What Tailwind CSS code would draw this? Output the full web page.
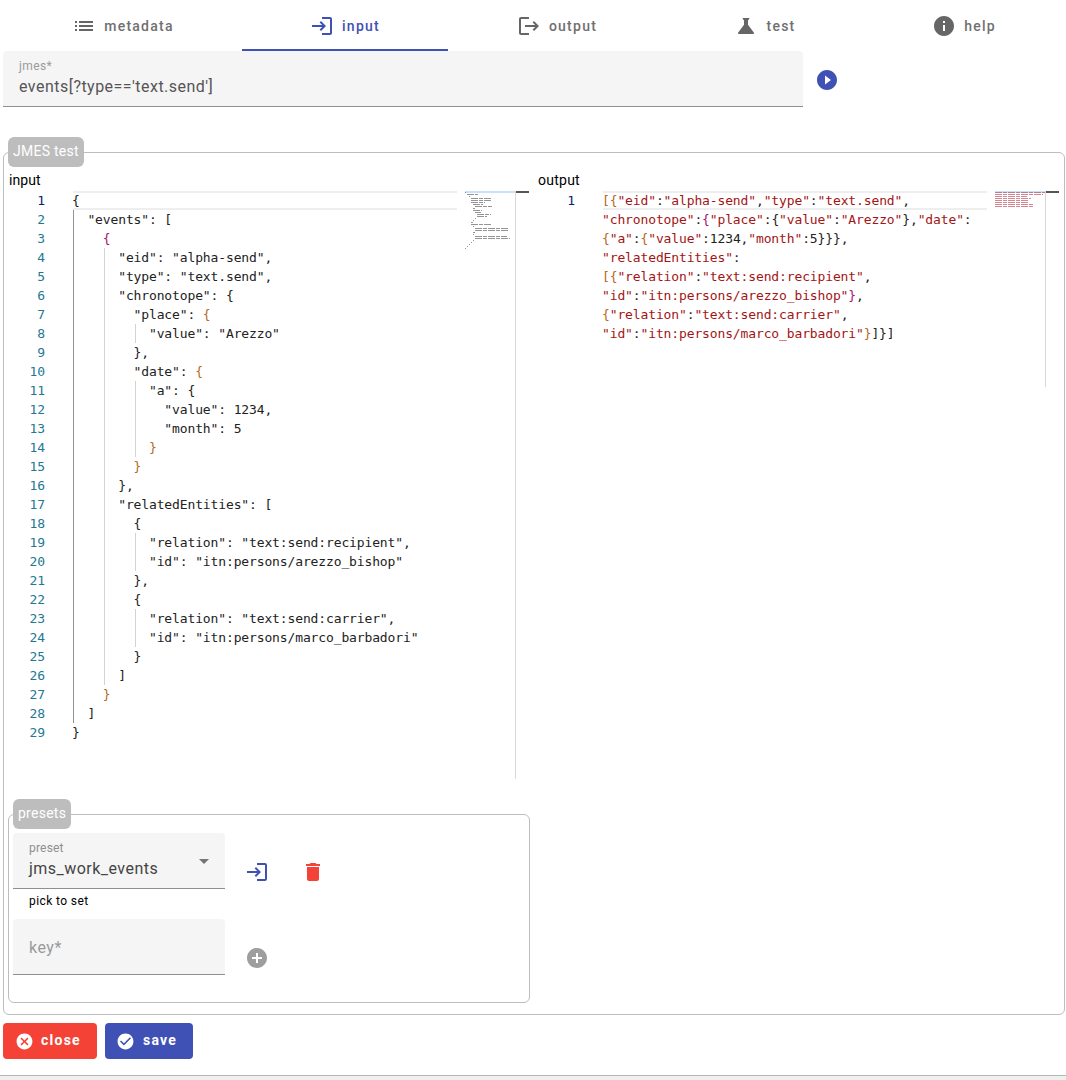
<!DOCTYPE html>
<html>
<head>
<meta charset="utf-8">
<script src="https://cdn.jsdelivr.net/npm/@tailwindcss/browser@4"></script>
</head>
<body class="bg-white">
<div class="w-[1066px] h-[1080px] overflow-hidden flex flex-col font-[Roboto] text-black">
  <nav class="flex h-[51px] shrink-0 text-sm font-medium tracking-[1.25px] text-[#707070]">
    <div class="w-[242px] pl-[4px] pt-[3px] border-b-2 border-transparent flex items-center justify-center gap-2">
      <svg class="w-6 h-6 fill-[#666]" viewBox="0 0 24 24"><path d="M3 13h2v-2H3v2zm0 4h2v-2H3v2zm0-8h2V7H3v2zm4 4h14v-2H7v2zm0 4h14v-2H7v2zM7 7v2h14V7H7z"/></svg>
      <span>metadata</span>
    </div>
    <div class="w-[206px] pt-[3px] border-b-2 border-[#3f51b5] text-[#3f51b5] flex items-center justify-center gap-2">
      <svg class="w-6 h-6 fill-[#3f51b5]" viewBox="0 0 24 24"><path d="M11 7L9.6 8.4l2.6 2.6H2v2h10.2l-2.6 2.6L11 17l5-5-5-5zm9 12h-8v2h8c1.1 0 2-.9 2-2V5c0-1.1-.9-2-2-2h-8v2h8v14z"/></svg>
      <span>input</span>
    </div>
    <div class="w-[217px] pt-[3px] pl-px border-b-2 border-transparent flex items-center justify-center gap-2">
      <svg class="w-6 h-6 fill-[#666]" viewBox="0 0 24 24"><path d="M17 7l-1.41 1.41L18.17 11H8v2h10.17l-2.58 2.58L17 17l5-5zM4 5h8V3H4c-1.1 0-2 .9-2 2v14c0 1.1.9 2 2 2h8v-2H4V5z"/></svg>
      <span>output</span>
    </div>
    <div class="w-[200px] pt-[3px] border-b-2 border-transparent flex items-center justify-center gap-2">
      <svg class="w-6 h-6 fill-[#666]" viewBox="0 0 24 24"><path d="M19.8 18.4L14 10.67V6.5l1.35-1.69c.26-.33.03-.81-.39-.81H9.04c-.42 0-.65.48-.39.81L10 6.5v4.17L4.2 18.4c-.49.66-.02 1.6.8 1.6h14c.82 0 1.29-.94.8-1.6z"/></svg>
      <span>test</span>
    </div>
    <div class="w-[198px] pt-[3px] border-b-2 border-transparent flex items-center justify-center gap-2">
      <svg class="w-6 h-6 fill-[#666]" viewBox="0 0 24 24"><path d="M12 2C6.48 2 2 6.48 2 12s4.48 10 10 10 10-4.48 10-10S17.52 2 12 2zm1 15h-2v-6h2v6zm0-8h-2V7h2v2z"/></svg>
      <span>help</span>
    </div>
  </nav>

  <div class="pl-[3px] pr-[2px] flex flex-col flex-1">
    <div class="flex items-center gap-[12px] h-[56px] shrink-0">
      <div class="w-[800px] h-[56px] bg-[#f5f5f5] rounded-t border-b border-[#8f8f8f] px-4 pt-[8px]">
        <div class="text-xs leading-[15px] tracking-[0.4px] text-[#9a9a9a]">jmes*</div>
        <div class="text-base leading-[24px] tracking-[0.47px] text-[#555] mt-px">events[?type=='text.send']</div>
      </div>
      <svg class="w-6 h-6 mt-[2px] fill-[#3f51b5]" viewBox="0 0 24 24"><path d="M12 2C6.48 2 2 6.48 2 12s4.48 10 10 10 10-4.48 10-10S17.52 2 12 2zm-2 14.5v-9l6 4.5-6 4.5z"/></svg>
    </div>

    <fieldset class="mt-[30px] w-[1061px] h-[878px] border border-[#bdbdbd] rounded-md px-1 shrink-0">
      <legend class="h-[30px] px-[5px] text-left leading-[29px] text-sm tracking-[0.25px] bg-[#bdbdbd] text-white rounded-md">JMES test</legend>
      <div class="flex gap-2 pt-[4px]">
        <div class="w-[522px] flex flex-col">
          <div class="pl-px text-sm h-[20px] leading-[19px] tracking-[0.1px]">input</div>
          <div class="flex h-[588px] text-[13px] leading-[19px] tracking-[-0.13px] font-[DejaVu_Sans_Mono] text-[#222]">
            <div class="w-[65px] pr-[28px] text-right text-[#237893] shrink-0">
              <div class="text-[#0b216f]">1</div><div>2</div><div>3</div><div>4</div><div>5</div><div>6</div><div>7</div><div>8</div><div>9</div><div>10</div><div>11</div><div>12</div><div>13</div><div>14</div><div>15</div><div>16</div><div>17</div><div>18</div><div>19</div><div>20</div><div>21</div><div>22</div><div>23</div><div>24</div><div>25</div><div>26</div><div>27</div><div>28</div><div>29</div>
            </div>
            <div class="relative w-[384px] shrink-0">
              <div class="absolute left-0 right-0 top-0 h-[19px] border-y-2 border-[#eeeeee]"></div>
              <div class="absolute left-0 top-[19px] h-[513px] w-px bg-[#939393]"></div>
              <div class="absolute left-[31px] top-[57px] h-[437px] w-px bg-[#d3d3d3]"></div>
              <div class="absolute left-[62px] top-[133px] h-[19px] w-px bg-[#d3d3d3]"></div>
              <div class="absolute left-[62px] top-[190px] h-[76px] w-px bg-[#d3d3d3]"></div>
              <div class="absolute left-[62px] top-[342px] h-[38px] w-px bg-[#d3d3d3]"></div>
              <div class="absolute left-[62px] top-[418px] h-[38px] w-px bg-[#d3d3d3]"></div>
              <div class="relative -ml-px [&>div]:whitespace-pre">
                <div>{</div>
                <div>  "events": [</div>
                <div>    <span class="text-[#a3156e]">{</span></div>
                <div>      "eid": "alpha-send",</div>
                <div>      "type": "text.send",</div>
                <div>      "chronotope": {</div>
                <div>        "place": <span class="text-[#b56a1c]">{</span></div>
                <div>          "value": "Arezzo"</div>
                <div>        },</div>
                <div>        "date": <span class="text-[#b56a1c]">{</span></div>
                <div>          "a": {</div>
                <div>            "value": 1234,</div>
                <div>            "month": 5</div>
                <div>          <span class="text-[#b56a1c]">}</span></div>
                <div>        <span class="text-[#b56a1c]">}</span></div>
                <div>      },</div>
                <div>      "relatedEntities": [</div>
                <div>        {</div>
                <div>          "relation": "text:send:recipient",</div>
                <div>          "id": "itn:persons/arezzo_bishop"</div>
                <div>        },</div>
                <div>        {</div>
                <div>          "relation": "text:send:carrier",</div>
                <div>          "id": "itn:persons/marco_barbadori"</div>
                <div>        }</div>
                <div>      ]</div>
                <div>    <span class="text-[#b56a1c]">}</span></div>
                <div>  ]</div>
                <div>}</div>
              </div>
            </div>
            <div class="w-[8px] shrink-0"></div>
            <svg class="w-[50px] h-[60px] shrink-0" viewBox="0 0 50 60">
              <rect x="0" y="0" width="50" height="2" fill="#c9e2fb"/>
              <path d="M0 1.5h1M2 3.5h11M4 5.5h1M6 7.5h20M6 9.5h20M6 11.5h14M8 13.5h10M10 15.5h17M8 17.5h2M8 19.5h9M10 21.5h6M12 23.5h14M12 25.5h10M10 27.5h1M8 29.5h1M6 31.5h2M6 33.5h20M8 35.5h1M10 37.5h34M10 39.5h33M8 41.5h2M8 43.5h1M10 45.5h32M10 47.5h35M8 49.5h1M6 51.5h1M4 53.5h1M2 55.5h1M0 57.5h1" stroke="#666" stroke-opacity="0.7" stroke-width="1" stroke-dasharray="7 1 4 1" fill="none"/>
            </svg>
            <div class="w-[14px] shrink-0 border-l border-[#d8d8d8]">
              <div class="h-[2px] bg-[#555]"></div>
            </div>
          </div>

          <fieldset class="mt-[20px] h-[204px] border border-[#bdbdbd] rounded-md px-1">
            <legend class="h-[30px] px-[5px] text-left leading-[29px] text-sm tracking-[0.25px] bg-[#bdbdbd] text-white rounded-md">presets</legend>
            <div class="pt-[4px] flex flex-col">
              <div class="flex items-center">
                <div class="relative w-[212px] h-[56px] bg-[#f5f5f5] rounded-t border-b border-[#8f8f8f] px-4 pt-[8px]">
                  <div class="text-xs leading-[15px] tracking-[0.2px] text-[#8f8f8f]">preset</div>
                  <div class="text-base leading-[24px] tracking-[0.47px] text-[#444] mt-px">jms_work_events</div>
                  <div class="absolute right-[16px] top-[26px] w-0 h-0 border-x-[5px] border-t-[5px] border-x-transparent border-t-[#757575]"></div>
                </div>
                <svg class="ml-[20px] mt-[22px] w-6 h-6 fill-[#3f51b5]" viewBox="0 0 24 24"><path d="M11 7L9.6 8.4l2.6 2.6H2v2h10.2l-2.6 2.6L11 17l5-5-5-5zm9 12h-8v2h8c1.1 0 2-.9 2-2V5c0-1.1-.9-2-2-2h-8v2h8v14z"/></svg>
                <svg class="ml-[32px] mt-[22px] w-6 h-6 fill-[#f44336]" viewBox="0 0 24 24"><path d="M6 19c0 1.1.9 2 2 2h8c1.1 0 2-.9 2-2V7H6v12zM19 4h-3.5l-1-1h-5l-1 1H5v2h14V4z"/></svg>
              </div>
              <div class="pl-4 pt-[5px] text-xs leading-[15px] h-[30px] tracking-[0.4px]">pick to set</div>
              <div class="flex items-end">
                <div class="w-[212px] h-[56px] bg-[#f5f5f5] rounded-t border-b border-[#8f8f8f] px-4 text-base leading-[57px] tracking-[0.5px] text-[#9a9a9a]">key*</div>
                <svg class="ml-[20px] mb-[5px] w-6 h-6 fill-[#9e9e9e]" viewBox="0 0 24 24"><path d="M12 2C6.48 2 2 6.48 2 12s4.48 10 10 10 10-4.48 10-10S17.52 2 12 2zm5 11h-4v4h-2v-4H7v-2h4V7h2v4h4v2z"/></svg>
              </div>
            </div>
          </fieldset>
        </div>

        <div class="w-[522px] flex flex-col">
          <div class="text-sm h-[20px] leading-[19px] tracking-[0.25px]">output</div>
          <div class="flex h-[196px] text-[13px] leading-[19px] tracking-[-0.13px] font-[DejaVu_Sans_Mono] text-[#a31515]">
            <div class="w-[65px] pr-[28px] text-right text-[#0b216f] shrink-0">1</div>
            <div class="relative w-[384px] shrink-0">
              <div class="absolute left-0 right-0 top-0 h-[19px] border-y-2 border-[#eeeeee]"></div>
              <div class="relative -ml-px [&>div]:whitespace-pre">
                <div><span class="text-[#b56a1c]">[{</span>"eid"<span class="text-[#222]">:</span>"alpha-send"<span class="text-[#222]">,</span>"type"<span class="text-[#222]">:</span>"text.send"<span class="text-[#222]">,</span></div>
                <div>"chronotope"<span class="text-[#222]">:</span><span class="text-[#a3156e]">{</span>"place"<span class="text-[#222]">:</span><span class="text-[#222]">{</span>"value"<span class="text-[#222]">:</span>"Arezzo"<span class="text-[#222]">}</span><span class="text-[#222]">,</span>"date"<span class="text-[#222]">:</span></div>
                <div><span class="text-[#b56a1c]">{</span>"a"<span class="text-[#222]">:</span><span class="text-[#b56a1c]">{</span>"value"<span class="text-[#222]">:</span><span class="text-[#222]">1234,</span>"month"<span class="text-[#222]">:5}}}</span><span class="text-[#222]">,</span></div>
                <div>"relatedEntities"<span class="text-[#222]">:</span></div>
                <div><span class="text-[#b56a1c]">[{</span>"relation"<span class="text-[#222]">:</span>"text:send:recipient"<span class="text-[#222]">,</span></div>
                <div>"id"<span class="text-[#222]">:</span>"itn:persons/arezzo_bishop"<span class="text-[#a3156e]">}</span><span class="text-[#222]">,</span></div>
                <div><span class="text-[#b56a1c]">{</span>"relation"<span class="text-[#222]">:</span>"text:send:carrier"<span class="text-[#222]">,</span></div>
                <div>"id"<span class="text-[#222]">:</span>"itn:persons/marco_barbadori"<span class="text-[#b56a1c]">}</span><span class="text-[#222]">]}]</span></div>
              </div>
            </div>
            <div class="w-[8px] shrink-0"></div>
            <svg class="w-[50px] h-[20px] shrink-0" viewBox="0 0 50 20">
              <rect x="0" y="0" width="50" height="2" fill="#c9e2fb"/>
              <path d="M0 1.5h50M0 3.5h48M0 5.5h32M0 7.5h36M0 9.5h34M0 11.5h34M0 13.5h38M0 15.5h38" stroke="#b8374a" stroke-opacity="0.6" stroke-width="1" stroke-dasharray="7 1 4 1" fill="none"/>
            </svg>
            <div class="w-[14px] shrink-0 border-l border-[#d8d8d8]">
              <div class="h-[2px] bg-[#555]"></div>
            </div>
          </div>
        </div>
      </div>
    </fieldset>

    <div class="flex gap-2 mt-2 text-sm font-bold tracking-[1.25px] text-white">
      <div class="w-[94px] h-9 rounded bg-[#f44336] flex items-center pl-[12px] gap-[7px]">
        <svg class="w-[19px] h-[19px] fill-white" viewBox="0 0 24 24"><path d="M12 2C6.47 2 2 6.47 2 12s4.47 10 10 10 10-4.47 10-10S17.53 2 12 2zm5 13.59L15.59 17 12 13.41 8.41 17 7 15.59 10.59 12 7 8.41 8.41 7 12 10.59 15.59 7 17 8.41 13.41 12 17 15.59z"/></svg>
        <span class="pb-[2px]">close</span>
      </div>
      <div class="w-[88px] h-9 rounded bg-[#3f51b5] flex items-center pl-[11px] gap-[8px]">
        <svg class="w-[19px] h-[19px] fill-white" viewBox="0 0 24 24"><path d="M12 2C6.48 2 2 6.48 2 12s4.48 10 10 10 10-4.48 10-10S17.52 2 12 2zm-2 15l-5-5 1.41-1.41L10 14.17l7.59-7.59L19 8l-9 9z"/></svg>
        <span class="pb-[2px]">save</span>
      </div>
    </div>
  </div>
  <div class="h-[5px] shrink-0 bg-[#f0f0f0] border-t border-[#b5b5b5]"></div>
</div>
</body>
</html>
